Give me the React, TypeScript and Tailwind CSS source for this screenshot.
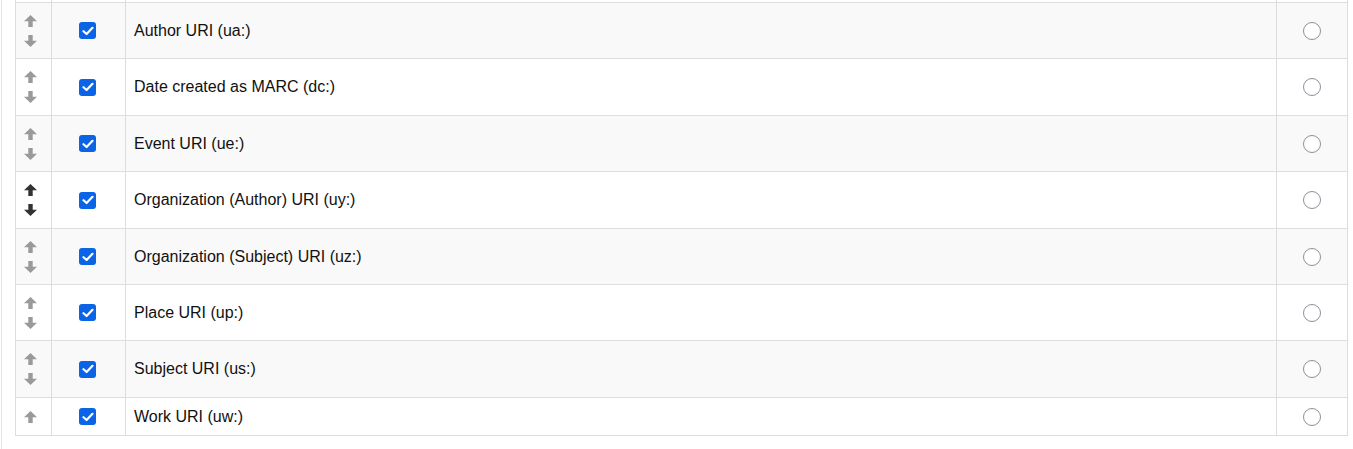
import React from "react";

type Row = { label: string; h: string; dark?: boolean; last?: boolean };

const rows: Row[] = [
  { label: "Author URI (ua:)", h: "h-[56px]" },
  { label: "Date created as MARC (dc:)", h: "h-[57px]" },
  { label: "Event URI (ue:)", h: "h-[56px]" },
  { label: "Organization (Author) URI (uy:)", h: "h-[57px]", dark: true },
  { label: "Organization (Subject) URI (uz:)", h: "h-[56px]" },
  { label: "Place URI (up:)", h: "h-[56px]" },
  { label: "Subject URI (us:)", h: "h-[57px]" },
  { label: "Work URI (uw:)", h: "h-[37px]", last: true },
];

function Arrow({ down, color }: { down?: boolean; color: string }) {
  return (
    <svg width="13" height="12" viewBox="0 0 13 12" className="block">
      <g transform={down ? "rotate(180 6.5 6)" : undefined} fill={color}>
        <polygon points="6.5,0 13,6.2 0,6.2" />
        <rect x="4.3" y="5.5" width="4.4" height="6.5" />
      </g>
    </svg>
  );
}

function Check() {
  return (
    <div className="w-[17px] h-[17px] rounded-[3px] bg-[#0b63e6] flex items-center justify-center">
      <svg width="12" height="10" viewBox="0 0 12 10">
        <polyline
          points="1.5,5.2 4.6,8 10.5,1.8"
          fill="none"
          stroke="white"
          strokeWidth="2.2"
          strokeLinecap="round"
          strokeLinejoin="round"
        />
      </svg>
    </div>
  );
}

export default function App() {
  return (
    <div
      className="w-[1353px] h-[449px] bg-white overflow-hidden"
      style={{ fontFamily: '"Liberation Sans", Arial, sans-serif' }}
    >
      <div className="ml-px h-full border-l border-[#e3e3e3] pl-[13px] pr-[5px]">
        {/* slice of preceding row */}
        <div className="flex h-[2px] border-l border-r border-[#dddddd]">
          <div className="w-[35px]" />
          <div className="w-[74px] border-l border-[#dddddd]" />
          <div className="w-[1151px] border-l border-[#dddddd]" />
          <div className="flex-1 border-l border-[#dddddd]" />
        </div>
        <div className="border border-[#dddddd] text-[16px] text-[#111]">
          {rows.map((r, i) => (
            <div
              key={r.label}
              className={`flex ${r.h} ${i % 2 === 0 ? "bg-[#f9f9f9]" : "bg-white"} ${
                r.last ? "" : "border-b border-[#dddddd]"
              }`}
            >
              <div className="w-[35px] pl-[8px] flex flex-col justify-center gap-[8px]">
                <Arrow color={r.dark ? "#333333" : "#9a9a9a"} />
                {!r.last && <Arrow down color={r.dark ? "#333333" : "#9a9a9a"} />}
              </div>
              <div className="w-[74px] border-l border-[#dddddd] flex items-center justify-center pr-[2px]">
                <Check />
              </div>
              <div className="w-[1151px] border-l border-[#dddddd] flex items-center pl-[8px]">
                {r.label}
              </div>
              <div className="flex-1 border-l border-[#dddddd] flex items-center justify-center">
                <div className="w-[18px] h-[18px] rounded-full border border-[#8f8f9d] bg-white" />
              </div>
            </div>
          ))}
        </div>
      </div>
    </div>
  );
}
